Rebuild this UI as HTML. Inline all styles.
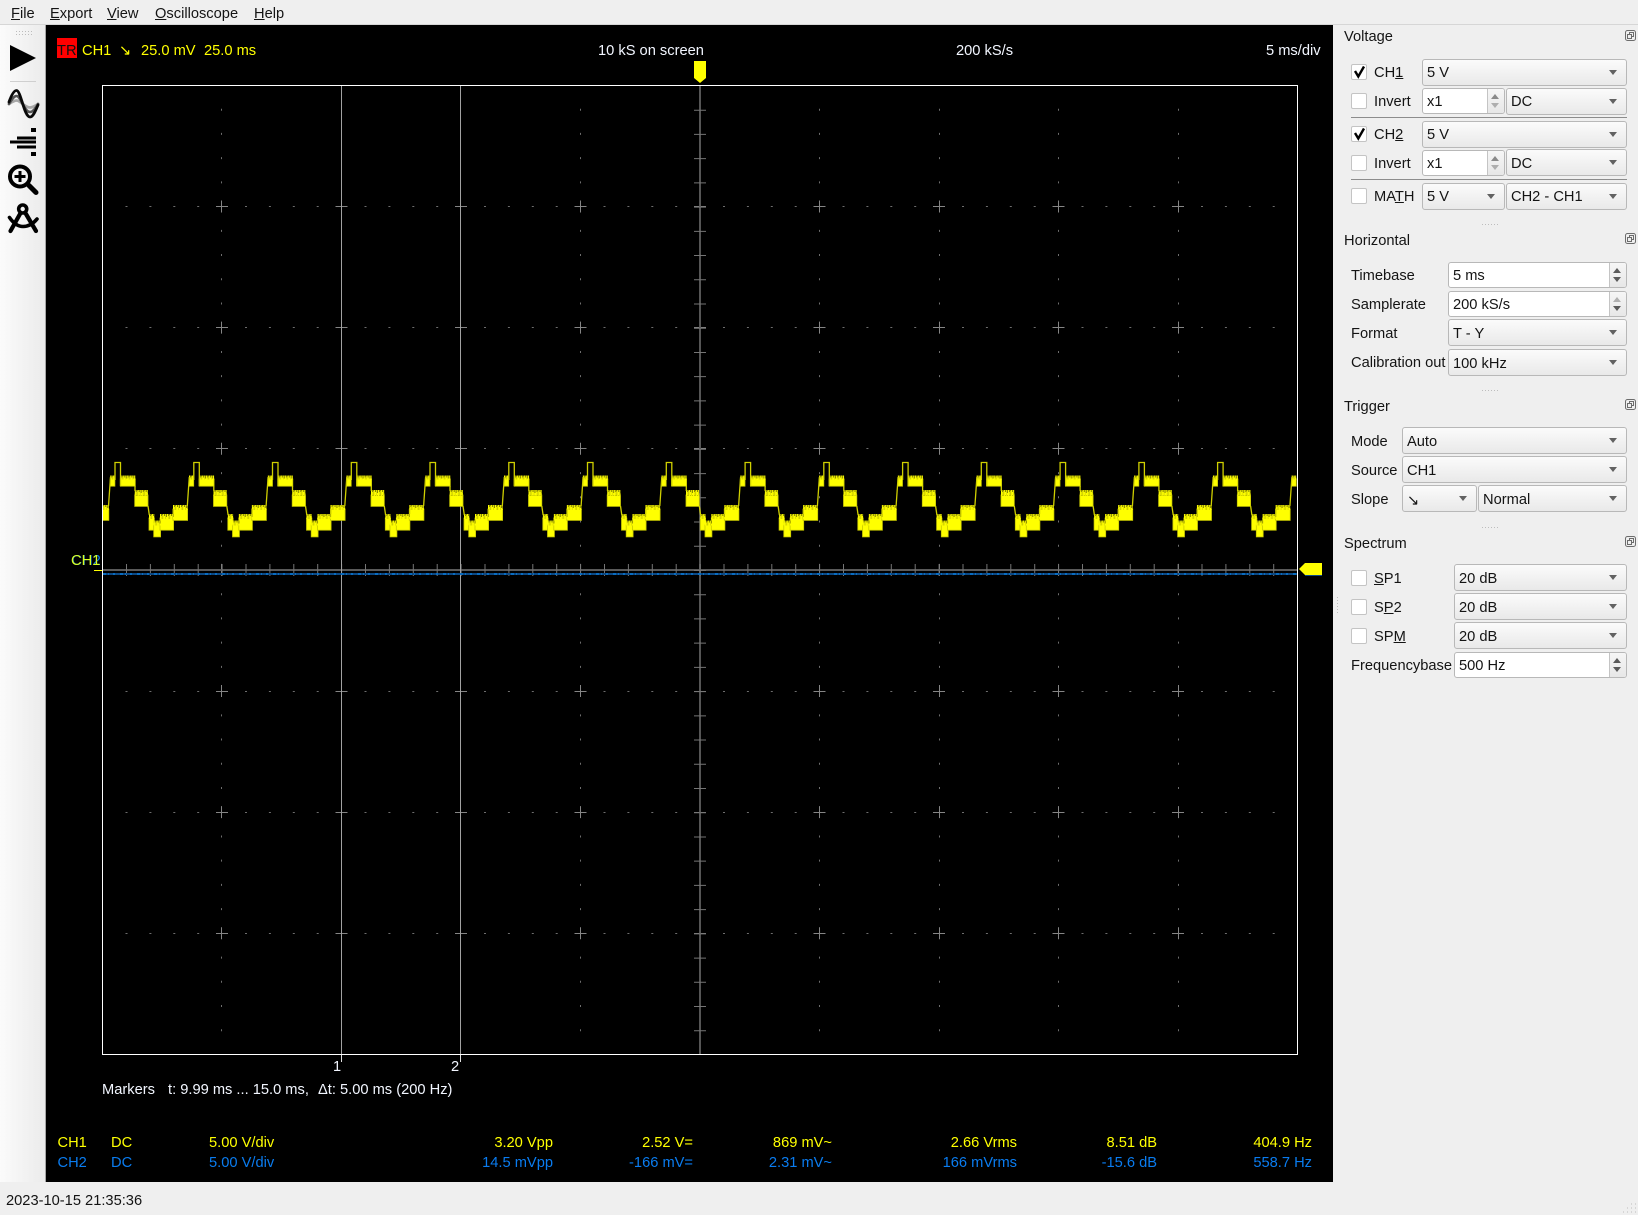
<!DOCTYPE html>
<html>
<head>
<meta charset="utf-8">
<title>Oscilloscope</title>
<style>
html,body{margin:0;padding:0}
body{width:1638px;height:1215px;overflow:hidden;background:#efefef;position:relative;font-family:"Liberation Sans","DejaVu Sans",sans-serif;font-size:14.67px;color:#141414}
.t{position:absolute;white-space:nowrap;line-height:18px}
.y{color:#ffff00}.b{color:#0a7cf0}.w{color:#f2f6ff}
.r{text-align:right}
.c,.s{position:absolute;box-sizing:border-box;border:1px solid #b8b8b8;border-radius:3px;padding-left:4px;white-space:nowrap}
.c{background:linear-gradient(#fbfbfb,#e9e9e9);height:27px;line-height:27px}
.c.l{line-height:29px}
.c::after{content:"";position:absolute;right:9px;top:10px;border-left:4.5px solid transparent;border-right:4.5px solid transparent;border-top:5px solid #626262}
.s{background:#fff;height:26px;line-height:26px}
.s i{position:absolute;right:0;top:0;bottom:0;width:16px;background:linear-gradient(#f6f6f6,#e7e7e7);border-left:1px solid #c4c4c4;border-radius:0 2px 2px 0}
.s i::before,.s i::after{content:"";position:absolute;left:3px;border-left:4.5px solid transparent;border-right:4.5px solid transparent}
.s i::before{top:5px;border-bottom:5px solid #5a5a5a}
.s i::after{top:14px;border-top:5px solid #5a5a5a}
.s i.ua::before{border-bottom-color:#b0b0b0}
.s i.bo::before{border-bottom-color:#8a8a8a}
.s i.bo::after{border-top-color:#aeaeae}
.k{position:absolute;left:1351px;width:16px;height:16px;box-sizing:border-box;border:1px solid #c4c4c4;border-radius:2px;background:#fff}
.sep{position:absolute;left:1351px;width:276px;height:1px;background:#8c8c8c}
.d{position:absolute;left:1482px;width:17px;height:1px;background:repeating-linear-gradient(90deg,#bdbdbd 0 1px,transparent 1px 3px)}
svg{position:absolute;left:0;top:0}
</style>
</head>
<body>
<!-- menu -->
<div style="position:absolute;left:0;top:24px;width:1638px;height:1px;background:#d6d6d6"></div>
<span class="t" style="left:11px;top:5px"><u>F</u>ile</span>
<span class="t" style="left:50px;top:5px"><u>E</u>xport</span>
<span class="t" style="left:107px;top:5px"><u>V</u>iew</span>
<span class="t" style="left:155px;top:5px"><u>O</u>scilloscope</span>
<span class="t" style="left:254px;top:5px"><u>H</u>elp</span>

<!-- toolbar -->
<div style="position:absolute;left:0;top:25px;width:45px;height:1157px;background:linear-gradient(90deg,#fbfbfb,#ebebeb)"></div>
<div style="position:absolute;left:45px;top:25px;width:1px;height:1157px;background:#a6a6a6"></div>
<!-- black scope area -->
<div style="position:absolute;left:46px;top:25px;width:1287px;height:1157px;background:#000"></div>

<svg width="1638" height="1215" viewBox="0 0 1638 1215">
<defs>
<clipPath id="fr"><rect x="103" y="86" width="1194" height="968"/></clipPath>
<pattern id="g" patternUnits="userSpaceOnUse" width="7" height="5">
<rect width="7" height="5" fill="#8a8a00"/>
<rect x="0" y="0" width="1" height="5" fill="#ffff00"/>
<rect x="1" y="2" width="1" height="3" fill="#e8e800"/>
<rect x="2" y="1" width="1" height="4" fill="#d0d000"/>
<rect x="3" y="0" width="1" height="5" fill="#f4f400"/>
<rect x="4" y="2" width="1" height="3" fill="#ffff00"/>
<rect x="5" y="0" width="1" height="5" fill="#e0e000"/>
<rect x="6" y="3" width="1" height="2" fill="#ffff00"/>
</pattern>
<g id="p">
<g fill="#ffff00" stroke="#c8c800" stroke-width=".8">
<rect x="5.800" y="479" width="15" height="7.200"/>
<rect x="20.200" y="495" width="13.300" height="11.400"/>
<rect x="34.500" y="518" width="5.300" height="12.200"/>
<rect x="39.200" y="525" width="6.900" height="11.900"/>
<rect x="45.500" y="518" width="13.600" height="12.200"/>
<rect x="58.500" y="509" width="14.600" height="11.400"/>
<rect x="74.500" y="479" width="4.700" height="7.200"/>
</g>
<g fill="url(#g)">
<rect transform="translate(5.800 475.500)" width="15" height="4"/>
<rect transform="translate(20.200 490)" width="13.300" height="5.500"/>
<rect transform="translate(34.500 514)" width="5.300" height="5"/>
<rect transform="translate(39.200 520.500)" width="6.900" height="5"/>
<rect transform="translate(45.500 514)" width="13.600" height="5"/>
<rect transform="translate(58.500 505)" width="14.600" height="5"/>
<rect transform="translate(74.500 475.500)" width="4.700" height="4"/>
</g>
<g fill="none" stroke="#d0d000" stroke-width="1.300">
<path d="M.5 480V462.500H6V486"/>
<path d="M33.500 506L34.800 515M72.800 506L74.800 477M20.500 486V491M58.800 514V509"/>
</g>
</g>
</defs>

<!-- grid dots -->
<g fill="none" stroke="#6e6e6e" stroke-width="1">
<path stroke-dasharray="2 21.9" d="M125.500 206.500H1285M125.500 327.500H1285M125.500 448.500H1285M125.500 691.500H1285M125.500 812.500H1285M125.500 933.500H1285"/>
<path stroke-dasharray="2 22.225" d="M221.500 108.700V1040M341.500 108.700V1040M460.500 108.700V1040M580.500 108.700V1040M819.500 108.700V1040M939.500 108.700V1040M1058.500 108.700V1040M1178.500 108.700V1040"/>
</g>
<!-- grid crosses -->
<g fill="none" stroke="#858585" stroke-width="1">
<path stroke-dasharray="12 107.5" d="M216 206.500H1185M216 327.500H1185M216 448.500H1185M216 691.500H1185M216 812.500H1185M216 933.500H1185"/>
<path stroke-dasharray="12 109.125" d="M221.500 200.500V940M341.500 200.500V940M460.500 200.500V940M580.500 200.500V940M819.500 200.500V940M939.500 200.500V940M1058.500 200.500V940M1178.500 200.500V940"/>
</g>
<!-- axes -->
<path d="M700 85V1054" stroke="#555" stroke-width="2" fill="none"/>
<path d="M102 570H1297" stroke="#5a5a5a" stroke-width="2" fill="none"/>
<path d="M700 109.700V1054" stroke="#757575" stroke-width="12" stroke-dasharray="1 23.225" fill="none"/>
<path d="M126 570H1297" stroke="#757575" stroke-width="12" stroke-dasharray="1 22.9" fill="none"/>
<!-- marker lines -->
<path d="M341.500 85V1054M460.500 85V1054" stroke="#a2a2a2" stroke-width="1" fill="none"/>
<path d="M341.500 1054V1062M460.500 1054V1062" stroke="#e0e0e0" stroke-width="1" fill="none"/>

<!-- channel 2 trace -->
<path d="M103 574H1297" stroke="#0c4a86" stroke-width="2" fill="none"/>
<path d="M103 574H1297" stroke="#0a6cc0" stroke-width="2" stroke-dasharray="3 2 1 4 2 5" fill="none"/>

<!-- channel 1 trace -->
<g clip-path="url(#fr)">
<use href="#p" x="35.700"/><use href="#p" x="114.500"/><use href="#p" x="193.300"/><use href="#p" x="272"/>
<use href="#p" x="350.800"/><use href="#p" x="429.500"/><use href="#p" x="508.300"/><use href="#p" x="587"/>
<use href="#p" x="665.800"/><use href="#p" x="744.600"/><use href="#p" x="823.300"/><use href="#p" x="902.100"/>
<use href="#p" x="980.800"/><use href="#p" x="1059.600"/><use href="#p" x="1138.400"/><use href="#p" x="1217.100"/>
</g>

<!-- frame -->
<rect x="102.500" y="85.500" width="1195" height="969" fill="none" stroke="#fff" stroke-width="1"/>

<!-- trigger / channel markers -->
<polygon points="694,61 706,61 706,78 700,83 694,78" fill="#ffff00"/>
<polygon points="1322,563 1322,575 1305,575 1299,569 1305,563" fill="#ffff00"/>
<path d="M1305 575.500H1322" stroke="#0c4a86" stroke-width="1"/>
<path d="M94 570.500H102" stroke="#ffff00" stroke-width="1"/>

<!-- toolbar icons -->
<g fill="#bcbcbc">
<rect x="16" y="31" width="1" height="1"/><rect x="19" y="31" width="1" height="1"/><rect x="22" y="31" width="1" height="1"/><rect x="25" y="31" width="1" height="1"/><rect x="28" y="31" width="1" height="1"/><rect x="31" y="31" width="1" height="1"/>
<rect x="16" y="34" width="1" height="1"/><rect x="19" y="34" width="1" height="1"/><rect x="22" y="34" width="1" height="1"/><rect x="25" y="34" width="1" height="1"/><rect x="28" y="34" width="1" height="1"/><rect x="31" y="34" width="1" height="1"/>
</g>
<polygon points="10,45 36,58 10,71" fill="#000"/>
<rect x="10" y="81" width="26" height="1" fill="#cfcfcf"/>
<g fill="none" stroke-linecap="round">
<path d="M9 104C12 102 14 100.500 16.500 100.500C21 100.500 24 107.500 30 107.500C33 107.500 35 106 38 104" stroke="#a8a8a8" stroke-width="2.800"/>
<path d="M9 104C12 99 14 96 16.500 96C21 96 24 112 30 112C33 112 35 109 38 104" stroke="#555" stroke-width="2.600"/>
<path d="M9 102C11.500 95 14 90.500 16.500 90.500C21 90.500 24 117 30 117C33 117 35.500 111 38 105" stroke="#0a0a0a" stroke-width="2.800"/>
</g>
<g fill="#000">
<rect x="31" y="128" width="5" height="4"/>
<rect x="17" y="136.500" width="19" height="3"/>
<rect x="10" y="140.500" width="26" height="3"/>
<rect x="17" y="145.500" width="19" height="3"/>
<rect x="31" y="152" width="5" height="4"/>
</g>
<g fill="none" stroke="#000">
<circle cx="20" cy="176.500" r="10" stroke-width="4"/>
<path d="M20 171V182M14.500 176.500H25.500" stroke-width="3"/>
<path d="M29 185.500L36 192.500" stroke-width="5" stroke-linecap="round"/>
</g>
<g fill="none" stroke="#000" stroke-linecap="round">
<circle cx="22.700" cy="209" r="4" stroke-width="3.600"/>
<path d="M20 214L10.500 231M26 214L36 231" stroke-width="4.200"/>
<path d="M9.500 217.500C14 224 19 226.500 23 226.500C28 226.500 33 224 37 219" stroke-width="3.600"/>
</g>

<!-- dock float icons -->
<g fill="none" stroke="#6c6c6c" stroke-width="1">
<g id="fi"><rect x="1625.500" y="30.500" width="10" height="10" rx="2"/><path d="M1629.500 34.500V32.500H1633.500V36.500H1631.500M1627.500 34.500H1631.500V38.500H1627.500Z"/></g>
<use href="#fi" y="203"/>
<use href="#fi" y="369"/>
<use href="#fi" y="506"/>
</g>
<!-- grips -->
<path d="M1337.500 597V613" stroke="#bdbdbd" stroke-width="1" stroke-dasharray="1 2" fill="none"/>
<path d="M1623 1212h1M1627 1212h1M1631 1212h1M1635 1212h1M1627 1208h1M1631 1208h1M1635 1208h1M1631 1204h1M1635 1204h1" stroke="#bdbdbd" stroke-width="1" fill="none"/>
</svg>

<!-- scope header -->
<div style="position:absolute;left:57px;top:38px;width:20px;height:20px;background:#ff0000"></div>
<span class="t" style="left:57px;top:42px;color:#111">TR</span>
<span class="t y" style="left:82px;top:42px">CH1</span>
<span class="t y" style="left:119px;top:42px;font-family:'DejaVu Sans',sans-serif">↘</span>
<span class="t y" style="left:141px;top:42px">25.0 mV</span>
<span class="t y" style="left:204px;top:42px">25.0 ms</span>
<span class="t w" style="left:598px;top:42px">10 kS on screen</span>
<span class="t w" style="left:956px;top:42px">200 kS/s</span>
<span class="t w" style="left:1266px;top:42px">5 ms/div</span>

<!-- channel labels -->
<span class="t b" style="left:71.500px;top:552px">CH2</span>
<span class="t" style="left:71px;top:552px;color:#d8ff20">CH1</span>

<!-- markers -->
<span class="t w" style="left:333px;top:1058px">1</span>
<span class="t w" style="left:451px;top:1058px">2</span>
<span class="t w" style="left:102px;top:1081px">Markers</span>
<span class="t w" style="left:168px;top:1081px">t: 9.99 ms ... 15.0 ms,</span>
<span class="t w" style="left:318px;top:1081px">Δt: 5.00 ms (200 Hz)</span>

<!-- stats -->
<span class="t y" style="left:57.500px;top:1134px">CH1</span>
<span class="t y" style="left:111px;top:1134px">DC</span>
<span class="t y" style="left:209px;top:1134px">5.00 V/div</span>
<span class="t y r" style="right:1085px;top:1134px">3.20 Vpp</span>
<span class="t y r" style="right:945px;top:1134px">2.52 V=</span>
<span class="t y r" style="right:806px;top:1134px">869 mV~</span>
<span class="t y r" style="right:621px;top:1134px">2.66 Vrms</span>
<span class="t y r" style="right:481px;top:1134px">8.51 dB</span>
<span class="t y r" style="right:326px;top:1134px">404.9 Hz</span>

<span class="t b" style="left:57.500px;top:1154px">CH2</span>
<span class="t b" style="left:111px;top:1154px">DC</span>
<span class="t b" style="left:209px;top:1154px">5.00 V/div</span>
<span class="t b r" style="right:1085px;top:1154px">14.5 mVpp</span>
<span class="t b r" style="right:945px;top:1154px">-166 mV=</span>
<span class="t b r" style="right:806px;top:1154px">2.31 mV~</span>
<span class="t b r" style="right:621px;top:1154px">166 mVrms</span>
<span class="t b r" style="right:481px;top:1154px">-15.6 dB</span>
<span class="t b r" style="right:326px;top:1154px">558.7 Hz</span>

<!-- status -->
<span class="t" style="left:6px;top:1192px">2023-10-15 21:35:36</span>

<!-- Voltage dock -->
<span class="t" style="left:1344px;top:28px">Voltage</span>
<div class="k" style="top:64px"></div>
<span class="t" style="left:1374px;top:64px">CH<u>1</u></span>
<div class="c" style="left:1422px;top:59px;width:205px">5 V</div>
<div class="k" style="top:93px"></div>
<span class="t" style="left:1374px;top:93px">Invert</span>
<div class="s" style="left:1422px;top:88px;width:83px">x1<i class="bo"></i></div>
<div class="c" style="left:1506px;top:88px;width:121px">DC</div>
<div class="sep" style="top:117px"></div>
<div class="k" style="top:126px"></div>
<span class="t" style="left:1374px;top:126px">CH<u>2</u></span>
<div class="c" style="left:1422px;top:121px;width:205px">5 V</div>
<div class="k" style="top:155px"></div>
<span class="t" style="left:1374px;top:155px">Invert</span>
<div class="s" style="left:1422px;top:150px;width:83px">x1<i class="bo"></i></div>
<div class="c l" style="left:1506px;top:149px;width:121px">DC</div>
<div class="sep" style="top:179px"></div>
<div class="k" style="top:188px"></div>
<span class="t" style="left:1374px;top:188px">MA<u>T</u>H</span>
<div class="c" style="left:1422px;top:183px;width:83px">5 V</div>
<div class="c" style="left:1506px;top:183px;width:121px">CH2 - CH1</div>
<div class="d" style="top:224px"></div>

<!-- Horizontal dock -->
<span class="t" style="left:1344px;top:232px">Horizontal</span>
<span class="t" style="left:1351px;top:267px">Timebase</span>
<div class="s" style="left:1448px;top:262px;width:179px">5 ms<i></i></div>
<span class="t" style="left:1351px;top:296px">Samplerate</span>
<div class="s" style="left:1448px;top:291px;width:179px">200 kS/s<i class="ua"></i></div>
<span class="t" style="left:1351px;top:325px">Format</span>
<div class="c l" style="left:1448px;top:319px;width:179px">T - Y</div>
<span class="t" style="left:1351px;top:354px">Calibration out</span>
<div class="c l" style="left:1448px;top:349px;width:179px">100 kHz</div>
<div class="d" style="top:390px"></div>

<!-- Trigger dock -->
<span class="t" style="left:1344px;top:398px">Trigger</span>
<span class="t" style="left:1351px;top:433px">Mode</span>
<div class="c l" style="left:1402px;top:427px;width:225px">Auto</div>
<span class="t" style="left:1351px;top:462px">Source</span>
<div class="c l" style="left:1402px;top:456px;width:225px">CH1</div>
<span class="t" style="left:1351px;top:491px">Slope</span>
<div class="c l" style="left:1402px;top:485px;width:75px;font-family:'DejaVu Sans',sans-serif">↘</div>
<div class="c l" style="left:1478px;top:485px;width:149px">Normal</div>
<div class="d" style="top:527px"></div>

<!-- Spectrum dock -->
<span class="t" style="left:1344px;top:535px">Spectrum</span>
<div class="k" style="top:570px"></div>
<span class="t" style="left:1374px;top:570px"><u>S</u>P1</span>
<div class="c l" style="left:1454px;top:564px;width:173px">20 dB</div>
<div class="k" style="top:599px"></div>
<span class="t" style="left:1374px;top:599px">S<u>P</u>2</span>
<div class="c l" style="left:1454px;top:593px;width:173px">20 dB</div>
<div class="k" style="top:628px"></div>
<span class="t" style="left:1374px;top:628px">SP<u>M</u></span>
<div class="c l" style="left:1454px;top:622px;width:173px">20 dB</div>
<span class="t" style="left:1351px;top:657px">Frequencybase</span>
<div class="s" style="left:1454px;top:652px;width:173px">500 Hz<i></i></div>

<!-- checkmarks (above checkboxes) -->
<svg width="1638" height="1215" viewBox="0 0 1638 1215">
<path d="M1355 71L1358.300 76.500L1364 66.500M1355 133L1358.300 138.500L1364 128.500" fill="none" stroke="#000" stroke-width="2.400"/>
</svg>
</body>
</html>
